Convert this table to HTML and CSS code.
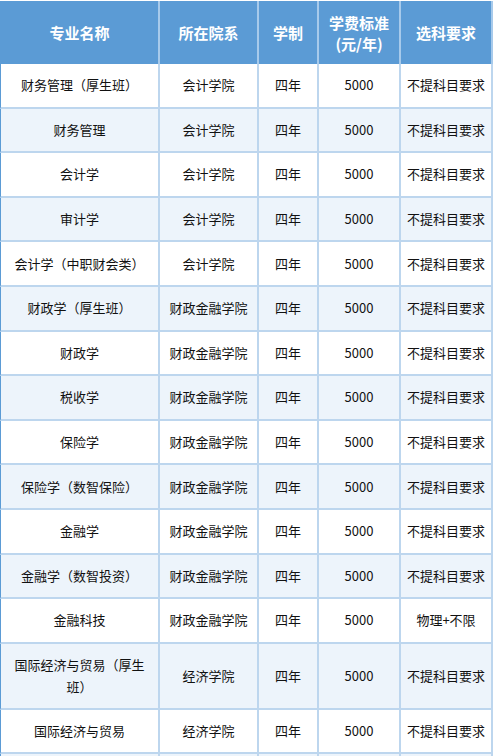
FILE: index.html
```html
<!DOCTYPE html>
<html lang="zh-CN">
<head>
<meta charset="utf-8">
<title>专业列表</title>
<link rel="stylesheet" href="styles.css">
</head>
<body>
<table class="majors">
  <colgroup>
    <col class="c1"><col class="c2"><col class="c3"><col class="c4"><col class="c5">
  </colgroup>
  <thead>
    <tr>
      <th>专业名称</th>
      <th>所在院系</th>
      <th>学制</th>
      <th>学费标准<br>(元/年)</th>
      <th>选科要求</th>
    </tr>
  </thead>
  <tbody>
    <tr><td>财务管理（厚生班）</td><td>会计学院</td><td>四年</td><td>5000</td><td>不提科目要求</td></tr>
    <tr><td>财务管理</td><td>会计学院</td><td>四年</td><td>5000</td><td>不提科目要求</td></tr>
    <tr><td>会计学</td><td>会计学院</td><td>四年</td><td>5000</td><td>不提科目要求</td></tr>
    <tr><td>审计学</td><td>会计学院</td><td>四年</td><td>5000</td><td>不提科目要求</td></tr>
    <tr><td>会计学（中职财会类）</td><td>会计学院</td><td>四年</td><td>5000</td><td>不提科目要求</td></tr>
    <tr><td>财政学（厚生班）</td><td>财政金融学院</td><td>四年</td><td>5000</td><td>不提科目要求</td></tr>
    <tr><td>财政学</td><td>财政金融学院</td><td>四年</td><td>5000</td><td>不提科目要求</td></tr>
    <tr><td>税收学</td><td>财政金融学院</td><td>四年</td><td>5000</td><td>不提科目要求</td></tr>
    <tr><td>保险学</td><td>财政金融学院</td><td>四年</td><td>5000</td><td>不提科目要求</td></tr>
    <tr><td>保险学（数智保险）</td><td>财政金融学院</td><td>四年</td><td>5000</td><td>不提科目要求</td></tr>
    <tr><td>金融学</td><td>财政金融学院</td><td>四年</td><td>5000</td><td>不提科目要求</td></tr>
    <tr><td>金融学（数智投资）</td><td>财政金融学院</td><td>四年</td><td>5000</td><td>不提科目要求</td></tr>
    <tr><td>金融科技</td><td>财政金融学院</td><td>四年</td><td>5000</td><td>物理+不限</td></tr>
    <tr class="tall"><td>国际经济与贸易（厚生班）</td><td>经济学院</td><td>四年</td><td>5000</td><td>不提科目要求</td></tr>
    <tr><td>国际经济与贸易</td><td>经济学院</td><td>四年</td><td>5000</td><td>不提科目要求</td></tr>
    <tr class="more"><td></td><td></td><td></td><td></td><td></td></tr>
  </tbody>
</table>
</body>
</html>
```

FILE: styles.css
```css
html, body {
  margin: 0;
  padding: 0;
  background: #ffffff;
}
body {
  padding-top: 1px;
  font-family: "Noto Sans CJK SC", "Noto Sans", sans-serif;
  color: #111111;
}
.majors {
  table-layout: fixed;
  border-collapse: separate;
  border-spacing: 0;
  width: 493px;
}
.c1 { width: 160px; }
.c2 { width: 99px; }
.c3 { width: 60px; }
.c4 { width: 82px; }
.c5 { width: 92px; }

.majors th,
.majors td {
  box-sizing: border-box;
  text-align: center;
  vertical-align: middle;
  padding: 0 10px;
}
.majors th {
  background: #5b9bd5;
  color: #ffffff;
  font-size: 15px;
  font-weight: bold;
  line-height: 21px;
  height: 63px;
  border-right: 2px solid #a7caeb;
}
.majors td {
  font-size: 13px;
  line-height: 22px;
  height: 44.6px;
  border-right: 2px solid #bdd6ee;
  border-bottom: 2px solid #bdd6ee;
  padding: 0 8px;
}
.majors td:first-child {
  padding: 0 12px;
}
.majors th:first-child,
.majors td:first-child {
  border-left: 1px solid #5b9bd5;
}
.majors th:nth-child(4),
.majors th:nth-child(5),
.majors td:nth-child(4),
.majors td:nth-child(5) {
  padding: 0 2px;
}
.majors tbody tr:nth-child(even) td {
  background: #edf4fb;
}
.majors tr.tall td {
  height: 66px;
}
```
